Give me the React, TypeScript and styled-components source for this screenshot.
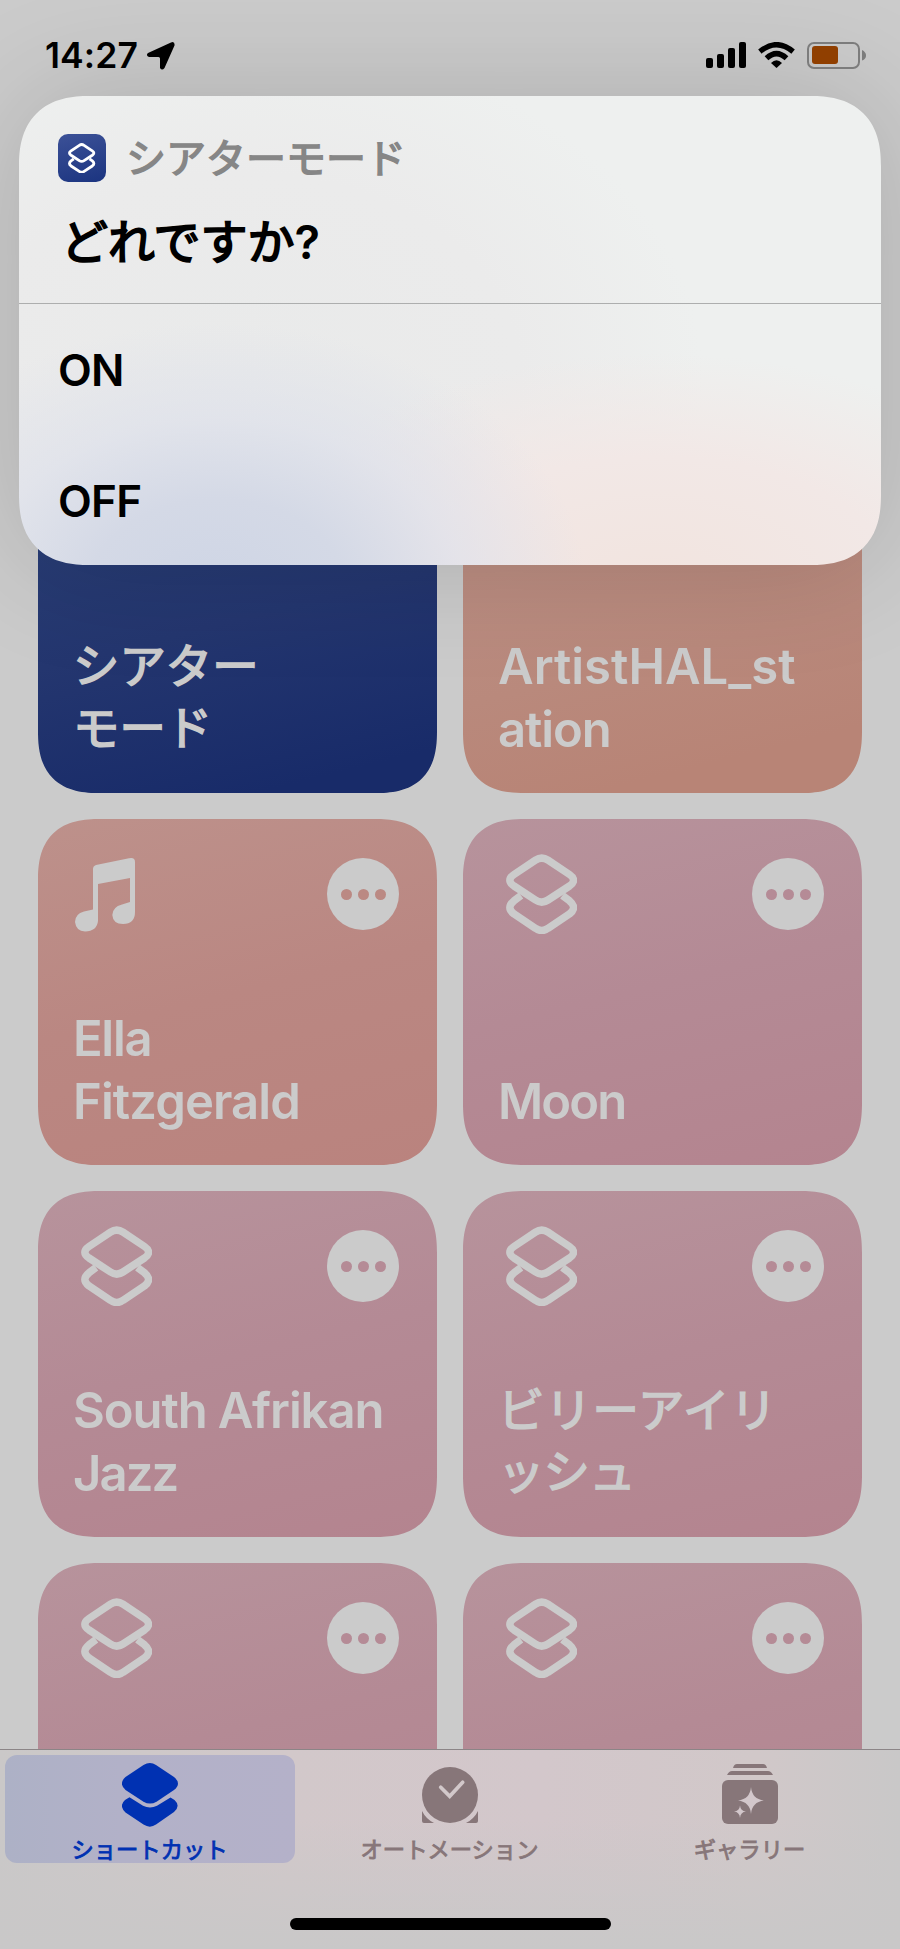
import React from 'react';
import styled, { createGlobalStyle } from 'styled-components';

const GlobalStyle = createGlobalStyle`
  *, *::before, *::after { box-sizing: border-box; }
  body { margin: 0; background: #cbcbcb; }
`;

const Screen = styled.div`
  position: relative;
  display: flex;
  flex-direction: column;
  width: 900px;
  height: 1949px;
  overflow: hidden;
  background: #cbcbcb;
  font-family: Inter, 'Noto Sans CJK JP', sans-serif;
  line-height: 1;
`;

const StatusBar = styled.header`
  position: relative;
  z-index: 3;
  display: flex;
  align-items: flex-start;
  justify-content: space-between;
  height: 96px;
  padding: 42px 34px 0 45px;
`;

const StatusLeft = styled.div`
  display: flex;
  align-items: center;
  gap: 9px;
  height: 27px;
`;

const Clock = styled.span`
  font-size: 35.5px;
  font-weight: 600;
  letter-spacing: 0.1px;
  color: #000;
`;

const StatusRight = styled.div`
  display: flex;
  align-items: flex-start;
  gap: 12px;
  height: 27px;
`;

const Content = styled.main`
  flex: 1;
  overflow: hidden;
  padding: 351px 38px 0;
`;

const CardGrid = styled.div`
  display: grid;
  grid-template-columns: repeat(2, 399px);
  grid-auto-rows: 346px;
  gap: 26px;
`;

type Tone = 'navy' | 'clay' | 'coral' | 'pink';

const tones: Record<Tone, string> = {
  navy: 'linear-gradient(166deg, #2b4179 0%, #24366f 50%, #182b69 90%)',
  clay: 'linear-gradient(166deg, #bd9186 0%, #b9897c 58%, #b88476 85%)',
  coral: 'linear-gradient(166deg, #bd918b 0%, #ba8782 50%, #ba837e 100%)',
  pink: 'linear-gradient(166deg, #b7939c 0%, #b48a95 48%, #b4848f 100%)',
};

const dotColors: Record<Tone, string> = {
  navy: '#2b4179',
  clay: '#bb8d82',
  coral: '#bb8983',
  pink: '#b58b96',
};

const Card = styled.article<{ $tone: Tone }>`
  display: flex;
  flex-direction: column;
  justify-content: space-between;
  padding: 35px 38px 32px 35px;
  border-radius: 52px;
  background: ${({ $tone }) => tones[$tone]};

  @supports (corner-shape: squircle) {
    border-radius: 62px;
    corner-shape: superellipse(1.34);
  }
`;

const CardTop = styled.div`
  display: flex;
  justify-content: space-between;
  align-items: flex-start;
`;

const MoreButton = styled.button<{ $tone: Tone }>`
  display: flex;
  align-items: center;
  justify-content: center;
  gap: 6px;
  width: 72px;
  height: 72px;
  margin: 4px 0 0;
  padding: 0;
  border: 0;
  border-radius: 50%;
  background: #cbcbcb;
  color: ${({ $tone }) => dotColors[$tone]};
`;

const Dot = styled.span`
  width: 11px;
  height: 11px;
  border-radius: 50%;
  background: currentColor;
`;

const CardIcon = styled.div<{ $indent: number; $drop: number }>`
  padding: ${({ $drop }) => $drop}px 0 0 ${({ $indent }) => $indent}px;
  color: #cbcbcb;
  svg { display: block; }
`;

const CardTitle = styled.h2<{ $ja?: boolean }>`
  margin: 0;
  padding-bottom: ${({ $ja }) => ($ja ? 1.5 : 0)}px;
  font-size: ${({ $ja }) => ($ja ? 46.4 : 49)}px;
  font-weight: ${({ $ja }) => ($ja ? 400 : 600)};
  line-height: 62.5px;
  color: #cbcbcb;
  white-space: pre;
  -webkit-text-stroke: ${({ $ja }) => ($ja ? 1.7 : 0)}px currentColor;
`;

const TitleLine = styled.span<{ $spacing: number }>`
  display: block;
  letter-spacing: ${({ $spacing }) => $spacing}px;
`;

const Dialog = styled.section`
  position: absolute;
  z-index: 2;
  top: 96px;
  left: 19px;
  display: flex;
  flex-direction: column;
  width: 862px;
  height: 469px;
  border-radius: 58px;
  background:
    radial-gradient(ellipse 370px 270px at 23% 106%, #ced5e5 0%, #d4d9e6 35%, rgba(222, 225, 235, 0.7) 65%, rgba(232, 233, 238, 0) 100%),
    radial-gradient(ellipse 430px 230px at 74% 104%, #f2e4df 0%, #f2e8e6 55%, rgba(240, 237, 234, 0) 100%),
    radial-gradient(ellipse 460px 340px at 26% 60%, #e9eaea 0%, #ebebeb 60%, rgba(236, 236, 236, 0) 100%),
    #eef0ef;
  box-shadow: 0 0 120px rgba(0, 0, 0, 0.15);

  @supports (corner-shape: squircle) {
    border-radius: 70px;
    corner-shape: superellipse(1.27);
  }
`;

const DialogHeader = styled.header`
  height: 208px;
  padding: 38px 39px 0;
  border-bottom: 1px solid #adaeae;
`;

const AppRow = styled.div`
  display: flex;
  align-items: center;
  gap: 20px;
  height: 48px;
`;

const AppIcon = styled.div`
  display: flex;
  align-items: center;
  justify-content: center;
  width: 48px;
  height: 48px;
  border-radius: 10px;
  background: linear-gradient(165deg, #3c5197, #1b3480);
  color: #fff;
`;

const AppName = styled.span`
  padding-top: 1px;
  font-size: 40px;
  font-weight: 400;
  -webkit-text-stroke: 1.5px currentColor;
  color: #868686;
`;

const Question = styled.h1`
  margin: 34px 0 0 3px;
  font-size: 47px;
  font-weight: 400;
  -webkit-text-stroke: 1.9px currentColor;
  line-height: 52px;
  color: #000;
`;

const QuestionMark = styled.span`
  font-weight: 600;
  -webkit-text-stroke: 0;
`;

const Option = styled.button`
  display: flex;
  align-items: center;
  height: 131px;
  padding: 2px 39px 0;
  border: 0;
  background: none;
  font: 600 44px/1 Inter, sans-serif;
  letter-spacing: -0.7px;
  color: #000;
`;

const TabBar = styled.nav`
  position: relative;
  display: grid;
  grid-template-columns: repeat(3, 300px);
  align-content: space-between;
  height: 200px;
  padding: 5px 0 19px;
  border-top: 1px solid #8b8587;
  background:
    linear-gradient(180deg, rgba(201, 200, 200, 0) 35%, #c9c8c8 100%),
    linear-gradient(90deg, #cac8c8 0%, #d2c8ca 32%, #d3c7cb 60%, #d1c8c9 84%, #c9c8c8 100%);
`;

const Tab = styled.button<{ $active?: boolean }>`
  display: flex;
  flex-direction: column;
  align-items: center;
  justify-content: space-between;
  justify-self: center;
  width: 290px;
  height: 108px;
  padding: 8px 0 1px;
  border: 0;
  border-radius: 12px;
  background: ${({ $active }) =>
    $active ? 'linear-gradient(90deg, #adb1c6 0%, #b2b1c8 40%, #b4b1c9 100%)' : 'none'};
  color: ${({ $active }) => ($active ? '#0031b2' : '#877679')};
  svg { display: block; }
`;

const TabLabel = styled.span`
  height: 27px;
  padding-right: 1px;
  font: 400 22.3px/26px 'Noto Sans CJK JP', sans-serif;
  -webkit-text-stroke: 0.9px currentColor;
`;

const HomeIndicator = styled.div`
  grid-column: 1 / -1;
  justify-self: center;
  width: 321px;
  height: 12px;
  border-radius: 6px;
  background: #000;
`;

const ShortcutIcon = ({ width = 71.4 }: { width?: number }) => (
  <svg width={width} height={(width * 80.4) / 71.4} viewBox="0 0 71.4 80.4" fill="none" stroke="currentColor" strokeWidth="7.5" strokeLinejoin="round">
    <path d="M29.5 6.2Q35.7 2 42 6.2L63.5 20.5Q71.7 26.2 63.5 32L42 46Q35.7 50.2 29.5 46L8 32Q-.3 26.2 8 20.5Z" />
    <path d="M15 41.5L8 46.8Q-.3 53.7 8 60L29.5 74.3Q35.7 78.7 42 74.3L63.5 60Q71.7 53.7 63.5 46.8L56.4 41.5" />
  </svg>
);

const MusicIcon = () => (
  <svg width="60" height="74" viewBox="0 0 60 74" fill="currentColor">
    <path d="M18 11Q18 8 21 7L54 .3Q60-1 60 4V54Q60 66 48 66Q38 66 37.3 57Q37.5 49 47 46.5L55 44V20L23 26V63Q22 73 10 73.5Q1 73 0 64Q0 56 9 53.5L18 51.5Z" />
  </svg>
);

const ShortcutTabIcon = () => (
  <svg width="56" height="64" viewBox="0 0 56 64" fill="currentColor">
    <path d="M21.5 2Q28 -2 34 2L52 14Q60 20.5 52 27L34.5 38.7Q28 42.5 21.5 38.7L3.5 27Q-3.8 20.5 3.5 14Z" />
    <path d="M7.5 34.3L21 42.8Q28 46 35 42.8L48.5 34.5L52.5 37Q59 43 52 49L34 61.5Q28 65.8 21.5 61.5L3.5 49.5Q-3.5 43 3 37Z" />
  </svg>
);

const AutomationIcon = () => (
  <svg width="56" height="64" viewBox="0 0 56 64">
    <g fill="currentColor">
      <circle cx="28" cy="32" r="28" />
      <path d="M0 48Q4 56 12 60H2Q0 60 0 58Z" />
      <path d="M56 48Q52 56 44 60H54Q56 60 56 58Z" />
    </g>
    <path d="M18.7 24.3L27.7 33.3L40.7 19.3" fill="none" stroke="#d2c8ca" strokeWidth="3.7" strokeLinecap="round" />
  </svg>
);

const GalleryIcon = () => (
  <svg width="56" height="64" viewBox="0 0 56 64">
    <g fill="currentColor">
      <path d="M11 5Q12 1 15 1H41Q44 1 45 5Z" />
      <path d="M5 12Q7 8 10 8H46Q49 8 51 12Z" />
      <rect y="17" width="56" height="44" rx="6" />
    </g>
    <g fill="#d3c7cb">
      <path d="M29 24Q30 36 42 37.5Q30 39 29 51Q28 39 16 37.5Q28 36 29 24Z" />
      <path d="M18 42.5Q18.5 48 24 48.5Q18.5 49 18 55Q17.5 49 12 48.5Q17.5 48 18 42.5Z" />
    </g>
  </svg>
);

const LocationIcon = () => (
  <svg width="28" height="28" viewBox="0 0 28 28">
    <path d="M24 .4Q28-1 27.5 3.5L17.5 26Q15 29 13 26V16.5Q13 15 11.5 15H2Q-1.5 13.5 1 11Z" />
  </svg>
);

const SignalIcon = () => (
  <svg width="40" height="26" viewBox="0 0 40 26">
    <rect y="16" width="7" height="10" rx="2" />
    <rect x="11" y="12" width="7" height="14" rx="2" />
    <rect x="22" y="6" width="7" height="20" rx="2" />
    <rect x="33" width="7" height="26" rx="2" />
  </svg>
);

const WifiIcon = () => (
  <svg width="37" height="26" viewBox="0 0 37 26">
    <g fill="none" stroke="#000" strokeWidth="5.4">
      <path d="M1.9 9.6Q18.5 -4.2 35.1 9.6" />
      <path d="M8.5 16.3Q18.5 7 28.5 16.3" />
    </g>
    <path d="M13 21Q18.5 15.5 24 21L18.5 26Z" />
  </svg>
);

const BatteryIcon = () => (
  <svg width="59" height="27" viewBox="0 0 59 27">
    <rect x="1" y="1" width="51" height="25" rx="6" fill="none" stroke="#7c7c7c" strokeWidth="2" />
    <rect x="5" y="4" width="26" height="18" rx="3" fill="#903f00" />
    <path d="M55 8Q59 10 59 13.5T55 18.5Z" fill="#7c7c7c" />
  </svg>
);

interface Line {
  text: string;
  spacing: number;
}

interface Shortcut {
  lines: Line[];
  tone: Tone;
  ja?: boolean;
  music?: boolean;
}

const shortcuts: Shortcut[] = [
  { lines: [{ text: 'シアター', spacing: 0 }, { text: 'モード', spacing: 0 }], tone: 'navy', ja: true },
  { lines: [{ text: 'ArtistHAL_st', spacing: 0 }, { text: 'ation', spacing: -1.1 }], tone: 'clay', music: true },
  { lines: [{ text: 'Ella', spacing: -1.3 }, { text: 'Fitzgerald', spacing: -0.9 }], tone: 'coral', music: true },
  { lines: [{ text: 'Moon', spacing: -1.9 }], tone: 'pink' },
  { lines: [{ text: 'South Afrikan', spacing: -1.1 }, { text: 'Jazz', spacing: -1.9 }], tone: 'pink' },
  { lines: [{ text: 'ビリーアイリ', spacing: 0.9 }, { text: 'ッシュ', spacing: -0.8 }], tone: 'pink', ja: true },
  { lines: [], tone: 'pink' },
  { lines: [], tone: 'pink' },
];

export default function App() {
  return (
    <>
      <GlobalStyle />
      <Screen lang="ja">
        <StatusBar>
          <StatusLeft>
            <Clock>14:27</Clock>
            <LocationIcon />
          </StatusLeft>
          <StatusRight>
            <SignalIcon />
            <WifiIcon />
            <BatteryIcon />
          </StatusRight>
        </StatusBar>
        <Content>
          <CardGrid>
            {shortcuts.map(({ lines, tone, ja, music }, i) => (
              <Card key={i} $tone={tone}>
                <CardTop>
                  <CardIcon $indent={music ? 2 : 7.5} $drop={music ? 4 : 0}>
                    {music ? <MusicIcon /> : <ShortcutIcon />}
                  </CardIcon>
                  <MoreButton $tone={tone} aria-label="More">
                    <Dot />
                    <Dot />
                    <Dot />
                  </MoreButton>
                </CardTop>
                <CardTitle $ja={ja}>
                  {lines.map(({ text, spacing }) => (
                    <TitleLine key={text} $spacing={spacing}>{text}</TitleLine>
                  ))}
                </CardTitle>
              </Card>
            ))}
          </CardGrid>
        </Content>
        <TabBar>
          <Tab $active>
            <ShortcutTabIcon />
            <TabLabel>ショートカット</TabLabel>
          </Tab>
          <Tab>
            <AutomationIcon />
            <TabLabel>オートメーション</TabLabel>
          </Tab>
          <Tab>
            <GalleryIcon />
            <TabLabel>ギャラリー</TabLabel>
          </Tab>
          <HomeIndicator />
        </TabBar>
        <Dialog role="dialog">
          <DialogHeader>
            <AppRow>
              <AppIcon>
                <ShortcutIcon width={27.3} />
              </AppIcon>
              <AppName>シアターモード</AppName>
            </AppRow>
            <Question>どれですか<QuestionMark>?</QuestionMark></Question>
          </DialogHeader>
          <Option>ON</Option>
          <Option>OFF</Option>
        </Dialog>
      </Screen>
    </>
  );
}
